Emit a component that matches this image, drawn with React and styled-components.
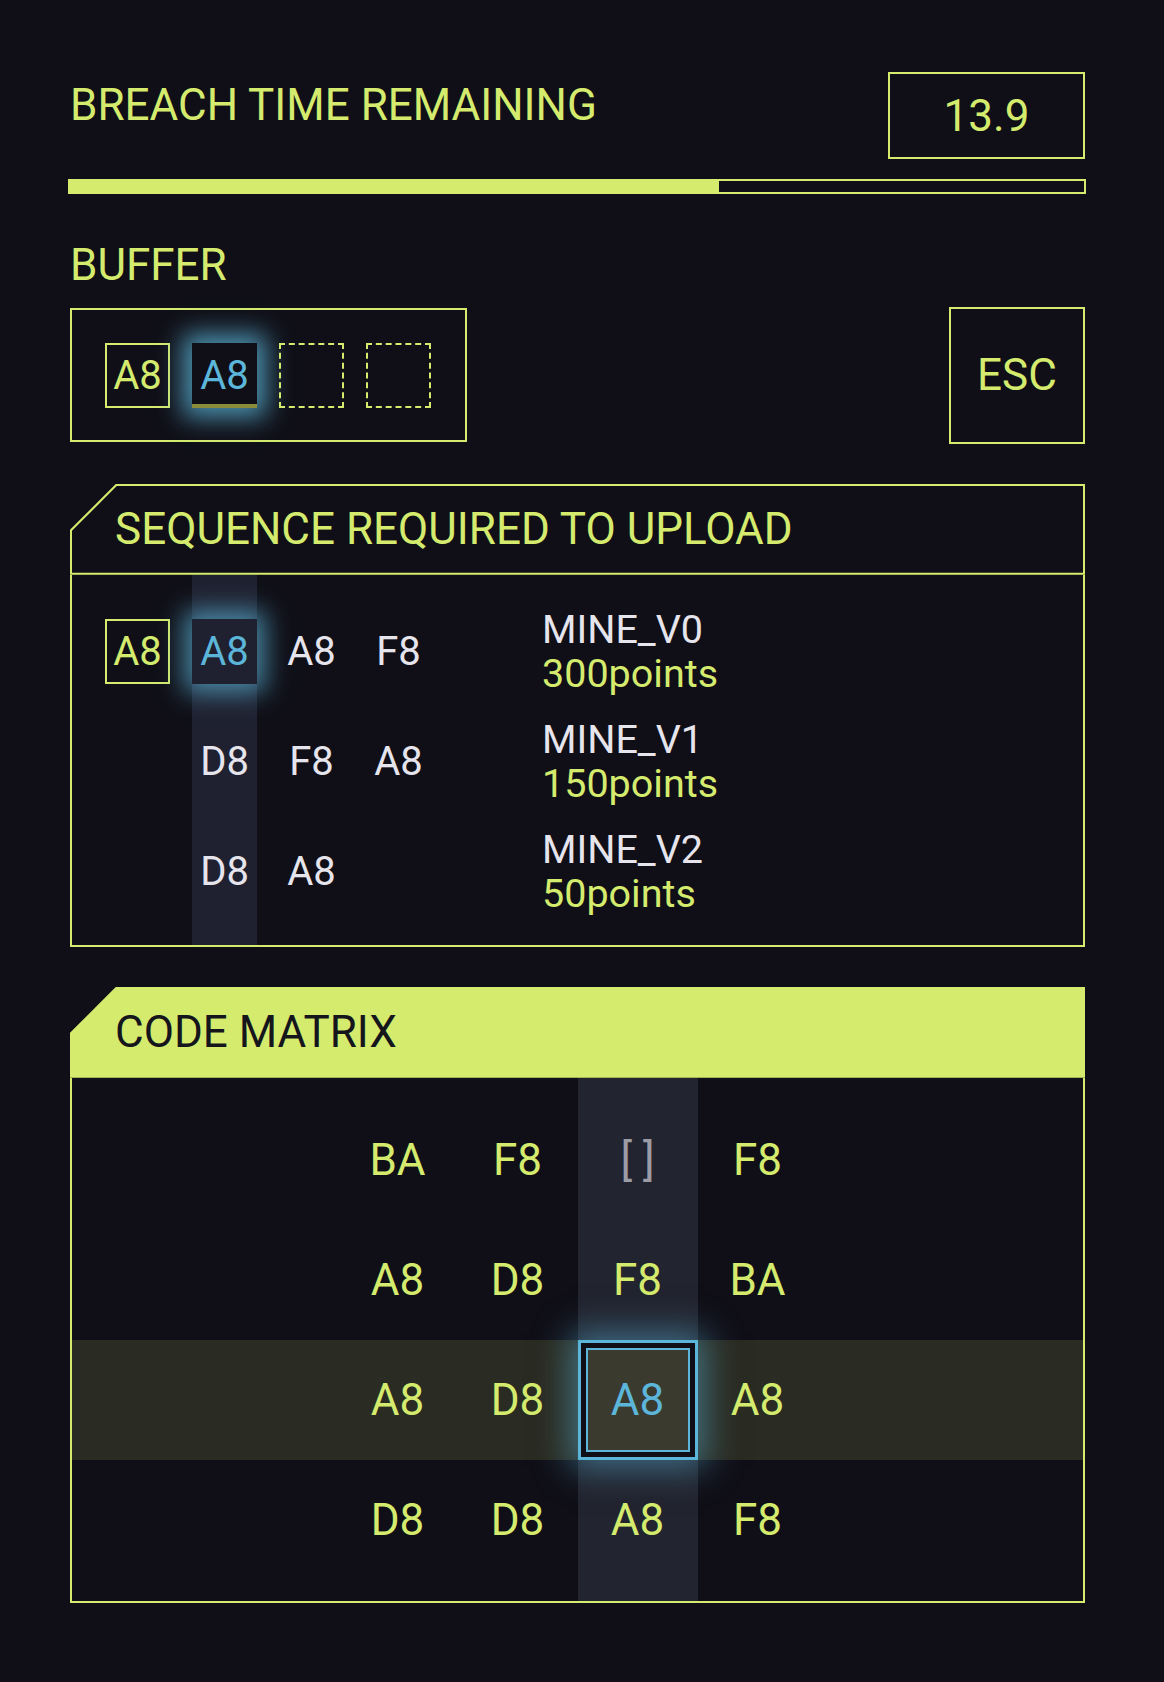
import React from 'react'
import styled, { createGlobalStyle, css } from 'styled-components'

const LIME = '#d4eb6e'
const BG = '#100f17'
const CYAN = '#5cb6da'
const WHITE = '#e6e4ec'
const COL_HL = '#1f2130'

const GlobalStyle = createGlobalStyle`
  html, body {
    margin: 0;
    padding: 0;
    background: ${BG};
    min-height: 100vh;
  }
  body {
    font-family: Roboto, "Noto Sans", sans-serif;
    color: ${LIME};
  }
`

const Page = styled.div`
  width: 1015px;
  margin-left: 70px;
  padding-top: 72px;
  padding-bottom: 80px;
`

const TopRow = styled.div`
  display: flex;
  justify-content: space-between;
  align-items: flex-start;
`

const Label = styled.div`
  font-size: 44px;
  line-height: 1.2;
  margin-top: ${p => p.$top || 0}px;
`

const TimerBox = styled.div`
  width: 197px;
  height: 87px;
  box-sizing: border-box;
  border: 2px solid ${LIME};
  display: flex;
  align-items: center;
  justify-content: center;
  font-size: 44px;
`

const Bar = styled.div`
  margin: 20px -1px 0 -2px;
  height: 15px;
  box-sizing: border-box;
  border: 2px solid ${LIME};
`

const BarFill = styled.div`
  height: 100%;
  background: ${LIME};
`

const BufferRow = styled.div`
  margin-top: 15px;
  display: flex;
  justify-content: space-between;
  align-items: center;
`

const BufferBox = styled.div`
  display: flex;
  gap: 22px;
  padding: 33px 34px 32px 33px;
  border: 2px solid ${LIME};
`

const Slot = styled.div`
  width: 65px;
  height: 65px;
  box-sizing: border-box;
  display: flex;
  align-items: center;
  justify-content: center;
  font-size: 40px;
  color: ${WHITE};
  ${p => p.$kind === 'done' && css`
    border: 2px solid ${LIME};
    color: ${LIME};
  `}
  ${p => p.$kind === 'empty' && css`
    border: 2px dashed ${LIME};
  `}
  ${p => p.$kind === 'active' && css`
    background: ${BG};
    color: ${CYAN};
    border-bottom: 4px solid #8a8c3c;
    padding-top: 4px;
    box-shadow: 0 0 24px 9px rgba(92, 182, 218, 0.8);
  `}
  ${p => p.$kind === 'current' && css`
    background: ${COL_HL};
    color: ${CYAN};
    box-shadow: 0 0 24px 8px rgba(92, 182, 218, 0.72);
  `}
`

const EscButton = styled.button`
  box-sizing: border-box;
  width: 136px;
  height: 137px;
  background: transparent;
  border: 2px solid ${LIME};
  color: ${LIME};
  font-family: inherit;
  font-size: 44px;
  padding: 0;
`

const Panel = styled.section`
  margin-top: 40px;
  display: flex;
  flex-direction: column;
`

const chamfer = (c) => `polygon(${c}px 0, 100% 0, 100% 100%, 0 100%, 0 ${c}px)`

const HeadFrame = styled.div`
  background: ${LIME};
  padding: 2px;
  clip-path: ${chamfer(46)};
`

const HeadInner = styled.div`
  height: ${p => p.$h}px;
  display: flex;
  align-items: center;
  padding-left: 43px;
  font-size: 44px;
  background: ${p => (p.$filled ? LIME : BG)};
  color: ${p => (p.$filled ? '#15151c' : LIME)};
  clip-path: ${chamfer(45)};
`

const Body = styled.div`
  border: 2px solid ${LIME};
  border-top: none;
  display: grid;
`

const SeqBody = styled(Body)`
  grid-template-columns: repeat(5, 65px) 1fr;
  grid-template-rows: 22px repeat(3, 110px) 18px;
  column-gap: 22px;
  padding-left: 33px;
`

const ColumnShade = styled.div`
  grid-column: ${p => p.$col};
  grid-row: 1 / -1;
  background: ${p => p.$color};
`

const RowShade = styled.div`
  grid-column: 1 / -1;
  grid-row: ${p => p.$row};
  background: #2a2b22;
`

const SeqCell = styled(Slot)`
  align-self: center;
`

const Info = styled.div`
  align-self: center;
  grid-column: 6;
  font-size: 39.5px;
  line-height: 44px;
  padding-left: 2px;
`

const InfoName = styled.div`
  color: ${WHITE};
`

const InfoPoints = styled.div`
  color: ${LIME};
`

const MatrixBody = styled(Body)`
  grid-template-columns: 1fr repeat(4, 120px) 1fr;
  grid-template-rows: 22px repeat(4, 120px) 21px;
`

const MatrixCell = styled.div`
  display: flex;
  align-items: center;
  justify-content: center;
  font-size: 44px;
  color: ${p => (p.$used ? '#9c9ca6' : LIME)};
`

const Selected = styled.div`
  box-sizing: border-box;
  border: 3px solid ${CYAN};
  padding: 5px;
  background: ${BG};
  box-shadow: 0 0 32px 8px rgba(92, 182, 218, 0.5);
  display: flex;
`

const SelectedInner = styled.div`
  flex: 1;
  border: 2px solid ${CYAN};
  background: #3a3a2e;
  display: flex;
  align-items: center;
  justify-content: center;
  font-size: 44px;
  color: ${CYAN};
`

const sequences = [
  { cells: [['A8', 'done'], ['A8', 'current'], ['A8'], ['F8']], name: 'MINE_V0', points: 300 },
  { cells: [null, ['D8'], ['F8'], ['A8']], name: 'MINE_V1', points: 150 },
  { cells: [null, ['D8'], ['A8']], name: 'MINE_V2', points: 50 },
]

const matrix = [
  ['BA', 'F8', '[ ]', 'F8'],
  ['A8', 'D8', 'F8', 'BA'],
  ['A8', 'D8', 'A8', 'A8'],
  ['D8', 'D8', 'A8', 'F8'],
]

const buffer = [['A8', 'done'], ['A8', 'active'], ['', 'empty'], ['', 'empty']]

export default function App() {
  const timeLeft = 13.9
  const progress = 64

  return (
    <Page>
      <GlobalStyle />
      <TopRow>
        <Label $top={7}>BREACH TIME REMAINING</Label>
        <TimerBox>{timeLeft}</TimerBox>
      </TopRow>
      <Bar>
        <BarFill style={{ width: `${progress}%` }} />
      </Bar>

      <Label $top={45}>BUFFER</Label>
      <BufferRow>
        <BufferBox>
          {buffer.map(([v, kind], i) => (
            <Slot key={i} $kind={kind}>{v}</Slot>
          ))}
        </BufferBox>
        <EscButton>ESC</EscButton>
      </BufferRow>

      <Panel>
        <HeadFrame>
          <HeadInner $h={87}>SEQUENCE REQUIRED TO UPLOAD</HeadInner>
        </HeadFrame>
        <SeqBody>
          <ColumnShade $col={2} $color={COL_HL} />
          {sequences.map((seq, r) => (
            <React.Fragment key={seq.name}>
              {seq.cells.map((cell, c) =>
                cell ? (
                  <SeqCell
                    key={c}
                    $kind={cell[1]}
                    style={{ gridRow: r + 2, gridColumn: c + 1 }}
                  >
                    {cell[0]}
                  </SeqCell>
                ) : null
              )}
              <Info style={{ gridRow: r + 2 }}>
                <InfoName>{seq.name}</InfoName>
                <InfoPoints>{seq.points}points</InfoPoints>
              </Info>
            </React.Fragment>
          ))}
        </SeqBody>
      </Panel>

      <Panel>
        <HeadFrame>
          <HeadInner $h={87} $filled>CODE MATRIX</HeadInner>
        </HeadFrame>
        <MatrixBody>
          <ColumnShade $col={4} $color="#22242f" />
          <RowShade $row={4} />
          {matrix.map((row, r) =>
            row.map((v, c) => {
              const pos = { gridRow: r + 2, gridColumn: c + 2 }
              if (r === 2 && c === 2) {
                return (
                  <Selected key={`${r}-${c}`} style={pos}>
                    <SelectedInner>{v}</SelectedInner>
                  </Selected>
                )
              }
              return (
                <MatrixCell key={`${r}-${c}`} style={pos} $used={v === '[ ]'}>
                  {v}
                </MatrixCell>
              )
            })
          )}
        </MatrixBody>
      </Panel>
    </Page>
  )
}
